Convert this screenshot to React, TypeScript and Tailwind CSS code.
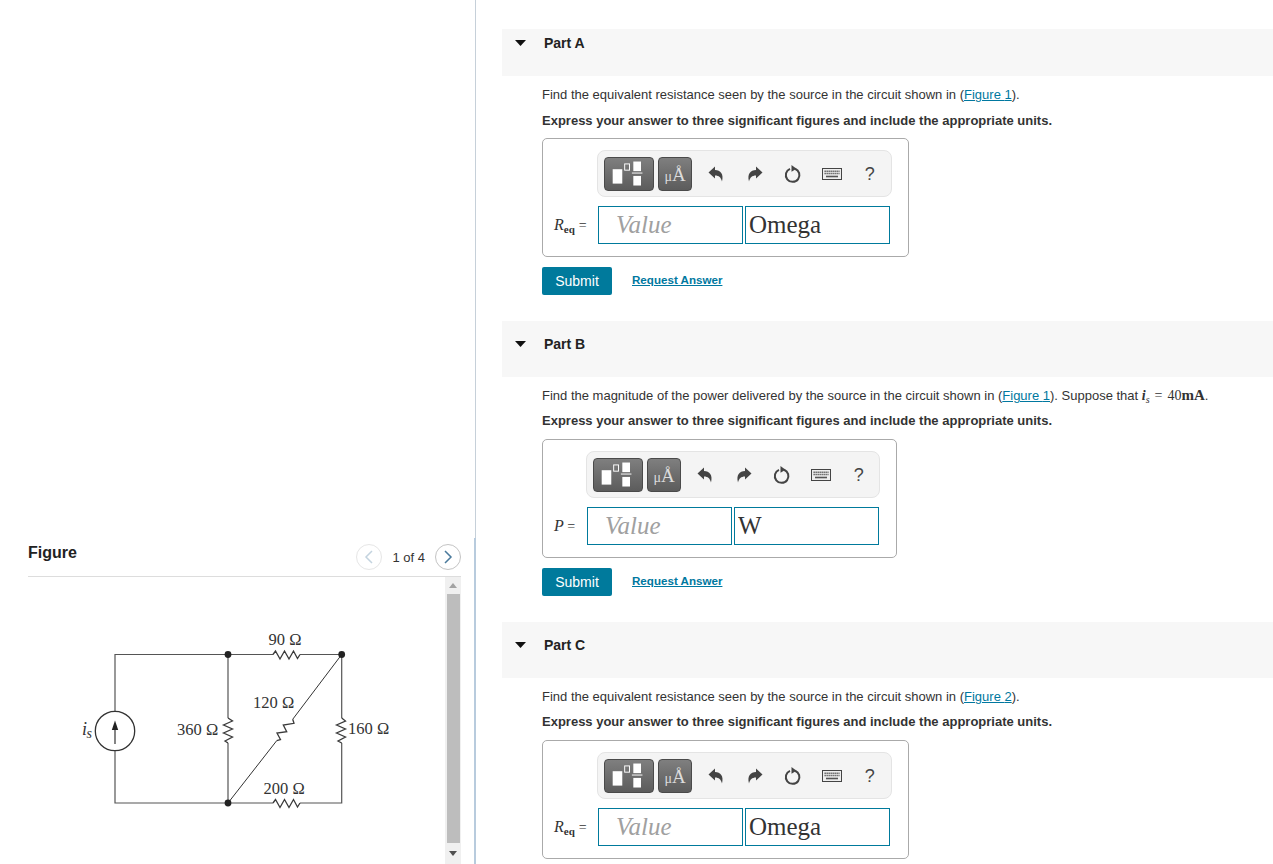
const SANS = "font-['Liberation_Sans',Arial,sans-serif]";
const SERIF = "font-['Liberation_Serif','Times_New_Roman',serif]";

function Zigzag({ d }: { d: string }) {
  return <path d={d} fill="none" stroke="#3a3a3a" strokeWidth={1.3} strokeLinejoin="miter" />;
}

function Circuit() {
  const labelClass = `${SERIF} fill-[#333333] text-[16.5px]`;
  return (
    <svg viewBox="28 577 417 287" className="h-[287px] w-[417px] shrink-0">
      <g fill="none" stroke="#555555" strokeWidth={1.2}>
        <path d="M115 711 V654.5 H273 M300 654.5 H341.7 V718 M341.7 743 V803 H300 M273 803 H115 V751" />
        <path d="M228 654.5 V718 M228 743 V803" />
        <path d="M341.7 654.5 L292.7 719.3 M276.7 740.7 L228 803" stroke="#333333" strokeWidth={1} />
        <circle cx={115} cy={731} r={19.7} stroke="#333333" strokeWidth={1.3} />
        <path d="M115 744 V727" stroke="#333333" />
      </g>
      <path d="M115 720.5 L118.2 730 H111.8 Z" fill="#222222" />
      <Zigzag d="M273 654.5 L275.5 651 L280 659 L284.5 651 L289 659 L293.5 651 L297.5 658.5 L300 654.5" />
      <Zigzag d="M273 803 L275.5 799.5 L280 807.5 L284.5 799.5 L289 807.5 L293.5 799.5 L297.5 807 L300 803" />
      <Zigzag d="M228 718 L232.5 721 L223.5 725 L232.5 729 L223.5 733 L232.5 737 L225 741 L228 743" />
      <Zigzag d="M341.7 718 L345.5 721 L336.5 725 L345.5 729 L336.5 733 L345.5 737 L338 741 L341.7 743" />
      <Zigzag d="M292.7 719.3 L294 723.3 L283.3 725 L286.7 731.7 L277 733 L280.5 739.5 L276.7 740.7" />
      <circle cx={228} cy={654.5} r={3.4} fill="#222222" />
      <circle cx={341.7} cy={654.5} r={3.4} fill="#222222" />
      <circle cx={228} cy={803} r={3.4} fill="#222222" />
      <text x={268.5} y={645} className={labelClass}>90 Ω</text>
      <text x={253} y={708} className={labelClass}>120 Ω</text>
      <text x={177} y={735} className={labelClass}>360 Ω</text>
      <text x={348} y={734} className={labelClass}>160 Ω</text>
      <text x={263.5} y={794} className={labelClass}>200 Ω</text>
      <text x={82} y={735} className={`${SERIF} fill-[#333333] text-[18px] italic`}>i</text>
      <text x={86.5} y={738} className={`${SERIF} fill-[#333333] text-[14px] italic`}>s</text>
    </svg>
  );
}

function Chevron({ left, color }: { left?: boolean; color: string }) {
  return (
    <svg viewBox="0 0 10 14" className="h-[14px] w-[10px]">
      <path d={left ? 'M8 1 L2 7 L8 13' : 'M2 1 L8 7 L2 13'} fill="none" stroke={color} strokeWidth={1.5} />
    </svg>
  );
}

function FigurePane() {
  return (
    <div className="flex h-[864px] w-[474px] shrink-0 flex-col pl-[28px] pr-[13px] pt-[540px]">
      <div className="flex h-[37px] items-start justify-between border-b border-[#dddddd]">
        <span className="mt-[3px] text-[16px] font-bold leading-5 text-[#222222]">Figure</span>
        <div className="mt-[4px] flex items-center">
          <span className="flex h-[26px] w-[26px] items-center justify-center rounded-full border border-[#e6e6e6]">
            <Chevron left color="#c3d3df" />
          </span>
          <span className="mx-[10px] mt-[2px] text-[13px] text-[#333333]">1 of 4</span>
          <span className="flex h-[26px] w-[26px] items-center justify-center rounded-full border border-[#c4c4c4]">
            <Chevron color="#4a7a9c" />
          </span>
        </div>
      </div>
      <div className="flex h-[287px]">
        <Circuit />
        <div className="flex w-[16px] flex-col items-center bg-[#f0f0f0]">
          <div className="flex h-[17px] items-center justify-center">
            <div className="h-0 w-0 border-x-[4px] border-b-[5px] border-x-transparent border-b-[#a3a3a3]" />
          </div>
          <div className="h-[249px] w-[13px] bg-[#bdbdbd]" />
          <div className="flex h-[20px] items-center justify-center">
            <div className="h-0 w-0 border-x-[4px] border-t-[5px] border-x-transparent border-t-[#505050]" />
          </div>
        </div>
      </div>
    </div>
  );
}

function Divider() {
  return (
    <div className="flex h-[864px] w-[2px] shrink-0 flex-col items-end">
      <div className="h-[538px] w-px bg-[#c6d0d9]" />
      <div className="h-[326px] w-[2px] bg-[#b8cbdd]" />
    </div>
  );
}

function Toolbar({ widthClass }: { widthClass: string }) {
  return (
    <div className={`flex h-[47px] ${widthClass} items-center rounded-[8px] border border-[#e4e4e4] bg-[#f4f4f4] pl-[6px]`}>
      <div className="flex h-[34px] w-[50px] items-center justify-center rounded-[4px] border border-[#4a4a4a] bg-gradient-to-b from-[#7f7f7f] to-[#5c5c5c]">
        <svg viewBox="0 0 50 34" className="h-[34px] w-[50px]">
          <rect x={8} y={12} width={10} height={15} fill="#ffffff" />
          <rect x={20.5} y={6.5} width={5} height={6.5} fill="none" stroke="#ffffff" strokeWidth={1} />
          <rect x={29.5} y={4} width={8} height={10} fill="#ffffff" />
          <rect x={28} y={15.5} width={11} height={1} fill="#ffffff" />
          <rect x={29.5} y={19} width={8} height={10} fill="#ffffff" />
        </svg>
      </div>
      <div className={`ml-[4px] flex h-[34px] w-[34px] items-baseline justify-center rounded-[4px] border border-[#4a4a4a] bg-gradient-to-b from-[#7f7f7f] to-[#5c5c5c] pt-[6px] ${SERIF} text-[#dcdcdc]`}>
        <span className="text-[14px]">μ</span>
        <span className="text-[19px] leading-[22px]">Å</span>
      </div>
      <div className="ml-[5px] flex items-center text-[#444444]">
        <span className="flex w-[38.5px] justify-center">
          <svg viewBox="0 0 16 16" className="h-[16px] w-[16px]">
            <path d="M0.5 6.5 L7 0.5 V4 C12.5 4 16 8 14 15.5 C13 11.5 11 9.5 7 9.5 V12.5 Z" fill="currentColor" />
          </svg>
        </span>
        <span className="flex w-[38.5px] justify-center">
          <svg viewBox="0 0 16 16" className="h-[16px] w-[16px]">
            <path d="M15.5 6.5 L9 0.5 V4 C3.5 4 0 8 2 15.5 C3 11.5 5 9.5 9 9.5 V12.5 Z" fill="currentColor" />
          </svg>
        </span>
        <span className="flex w-[38.5px] justify-center">
          <svg viewBox="0 0 18 18" className="h-[18px] w-[18px]">
            <path d="M11 3.7 A6.8 6.8 0 1 1 6 3.8" fill="none" stroke="currentColor" strokeWidth={2} />
            <path d="M7.5 0 L12.5 3.7 L7.5 6.8 Z" fill="currentColor" />
          </svg>
        </span>
        <span className="flex w-[38.5px] justify-center">
          <svg viewBox="0 0 20 12" className="h-[12px] w-[20px]">
            <rect x={0.5} y={0.5} width={19} height={11} fill="#eeeeee" stroke="#444444" />
            <path d="M2.5 3.2 H17.5 M2.5 5.5 H17.5" stroke="#555555" strokeWidth={1.4} strokeDasharray="1.3 .7" />
            <path d="M4 8.5 H16" stroke="#555555" strokeWidth={1.6} />
          </svg>
        </span>
        <span className="flex w-[37.5px] justify-center text-[18px] leading-none">?</span>
      </div>
    </div>
  );
}

function AnswerBox({
  label,
  labelClass,
  unit,
  gapClass,
  toolbarClass,
}: {
  label: React.ReactNode;
  labelClass: string;
  unit: string;
  gapClass: string;
  toolbarClass: string;
}) {
  return (
    <div className={`${gapClass} w-fit rounded-[5px] border border-[#aaaaaa] pb-[12px] pl-[11px] pr-[16px] pt-[11px]`}>
      <div className="flex">
        <div className={labelClass} />
        <div className="-ml-px">
          <Toolbar widthClass={toolbarClass} />
        </div>
      </div>
      <div className="mt-[9px] flex items-center">
        <div className={`${labelClass} ${SERIF} whitespace-nowrap text-[14px] text-[#333333]`}>{label}</div>
        <input
          readOnly
          placeholder="Value"
          className={`h-[38px] w-[145px] border border-[#007a9c] pl-[17px] ${SERIF} text-[25px] italic outline-none placeholder:text-[#a0a0a0]`}
        />
        <input
          readOnly
          value={unit}
          className={`ml-[2px] h-[38px] w-[145px] border border-[#007a9c] pl-[3px] ${SERIF} text-[25px] text-[#333333] outline-none`}
        />
      </div>
    </div>
  );
}

function Section({
  title,
  headerClass,
  prompt,
  promptTop,
  promptGap,
  answer,
  actions = true,
}: {
  title: string;
  headerClass: string;
  prompt: React.ReactNode;
  promptTop: string;
  promptGap: string;
  answer: React.ReactNode;
  actions?: boolean;
}) {
  return (
    <section className="mb-[26px]">
      <div className={`flex bg-[#f7f7f7] pl-[13px] ${headerClass}`}>
        <svg viewBox="0 0 11 6" className="mt-[7px] h-[6px] w-[11px]">
          <path d="M0 0 H11 L5.5 6 Z" fill="#111111" />
        </svg>
        <span className="ml-[18px] text-[14px] font-bold leading-5 text-[#222222]">{title}</span>
      </div>
      <div className="pl-[40px]">
        <p className={`${promptTop} h-5 whitespace-nowrap text-[13px] leading-5 text-[#333333]`}>{prompt}</p>
        <p className={`${promptGap} h-5 text-[13px] font-bold leading-5 text-[#333333]`}>
          Express your answer to three significant figures and include the appropriate units.
        </p>
        {answer}
        {actions && (
          <div className="mt-[10px] flex items-center">
            <button className="h-[28px] w-[70px] rounded-[2px] bg-[#007a9c] text-[14px] text-white">Submit</button>
            <a className="-mt-[2px] ml-[20px] text-[11.6px] font-bold text-[#0078a0] underline">Request Answer</a>
          </div>
        )}
      </div>
    </section>
  );
}

function FigureLink({ n }: { n: number }) {
  return <a className="text-[#0078a0] underline">Figure {n}</a>;
}

const reqLabel = (
  <>
    <i className="text-[16px]">R</i>
    <span className="align-[-3px] text-[11px] font-bold">eq</span>
    <span className="ml-[4px]">=</span>
  </>
);

export default function App() {
  return (
    <div className={`flex h-[864px] overflow-hidden bg-white ${SANS}`}>
      <FigurePane />
      <Divider />
      <main className="min-w-0 flex-1 pl-[26px] pt-[29px]">
        <Section
          title="Part A"
          headerClass="h-[47px] pt-[4px]"
          promptTop="mt-[9px]"
          promptGap="mt-[6px]"
          prompt={
            <>
              Find the equivalent resistance seen by the source in the circuit shown in (<FigureLink n={1} />).
            </>
          }
          answer={
            <AnswerBox label={reqLabel} labelClass="w-[44px]" unit="Omega" gapClass="mt-[7px]" toolbarClass="w-[295px]" />
          }
        />
        <Section
          title="Part B"
          headerClass="h-[56px] pt-[13px]"
          promptTop="mt-[8px]"
          promptGap="mt-[6px]"
          prompt={
            <>
              Find the magnitude of the power delivered by the source in the circuit shown in (<FigureLink n={1} />).
              Suppose that{' '}
              <span className={`${SERIF} text-[14px]`}>
                <i className="font-bold">i</i>
                <sub className="text-[10px] italic">s</sub>
                <span className="mx-[5px]">=</span>40<b className="text-[15px]">mA</b>
              </span>
              .
            </>
          }
          answer={
            <AnswerBox
              label={
                <>
                  <i className="text-[16px]">P</i> =
                </>
              }
              labelClass="w-[33px]"
              unit="W"
              gapClass="mt-[8px]"
              toolbarClass="w-[294px]"
            />
          }
        />
        <Section
          title="Part C"
          headerClass="h-[56px] pt-[13px]"
          promptTop="mt-[9px]"
          promptGap="mt-[5px]"
          prompt={
            <>
              Find the equivalent resistance seen by the source in the circuit shown in (<FigureLink n={2} />).
            </>
          }
          answer={
            <AnswerBox label={reqLabel} labelClass="w-[44px]" unit="Omega" gapClass="mt-[8px]" toolbarClass="w-[295px]" />
          }
          actions={false}
        />
      </main>
    </div>
  );
}
